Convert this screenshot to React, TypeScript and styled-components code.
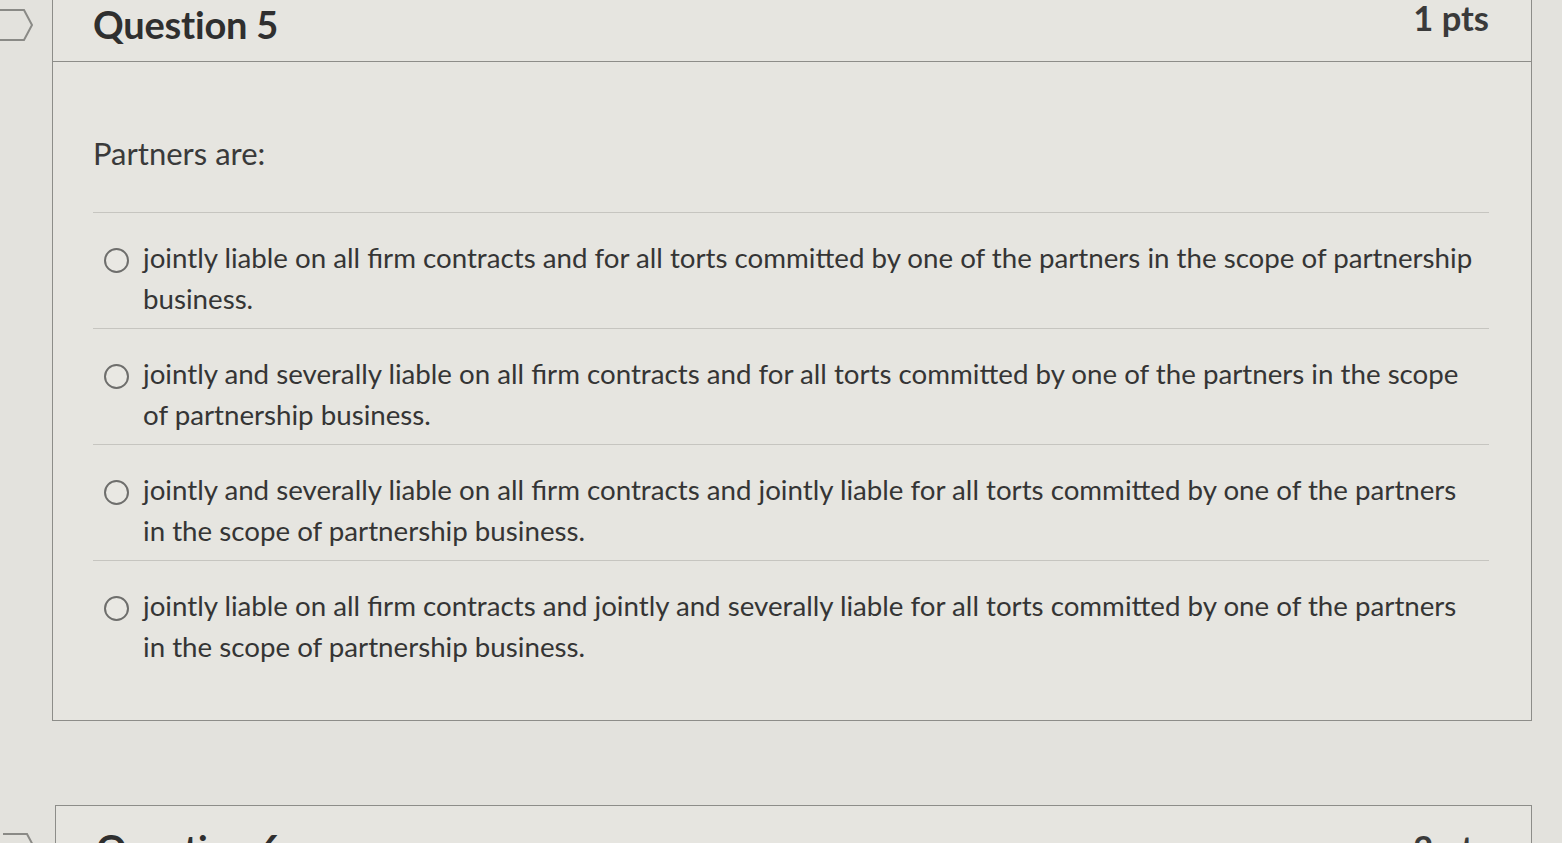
import React from "react";
import styled, { createGlobalStyle } from "styled-components";

const Global = createGlobalStyle`
  html, body { margin: 0; padding: 0; }
  body {
    width: 1562px;
    height: 843px;
    overflow: hidden;
    background: #e3e2dd;
    font-family: Lato, "Noto Sans", "Liberation Sans", sans-serif;
    color: #363636;
  }
`;

const Page = styled.div`
  display: flex;
  flex-direction: column;
  gap: 84px;
  padding-left: 52px;
  width: 1478px;
`;

const Card = styled.section<{ $top?: boolean }>`
  position: relative;
  background: #e6e5e0;
  border: 1px solid #8d8d89;
  border-top: ${(p) => (p.$top ? "none" : "1px solid #8d8d89")};
  margin-left: ${(p) => (p.$top ? "0" : "3px")};
  width: ${(p) => (p.$top ? "1478px" : "1475px")};
`;

const Flag = styled.svg<{ $y: number }>`
  position: absolute;
  left: -53px;
  top: ${(p) => p.$y}px;
  width: 34px;
  height: 34px;
`;

const Header = styled.header`
  display: flex;
  justify-content: space-between;
  align-items: flex-start;
  height: 61px;
  padding: 0 42px 0 40px;
  border-bottom: 1px solid #8d8d89;
`;

const Title = styled.h2<{ $top?: boolean }>`
  margin: ${(p) => (p.$top ? "2px" : "20px")} 0 0;
  font-size: 38px;
  font-weight: 700;
  line-height: 44px;
  color: #2f2f2f;
  letter-spacing: -0.2px;
`;

const Points = styled.div<{ $top?: boolean }>`
  margin-top: ${(p) => (p.$top ? "-4px" : "20px")};
  font-size: 34.5px;
  font-weight: 700;
  line-height: 44px;
  color: #3a3a3a;
`;

const Body = styled.div`
  padding: 72px 42px 0 40px;
`;

const Prompt = styled.p`
  margin: 0 0 40px;
  font-size: 31px;
  line-height: 38px;
  color: #3a3a3a;
`;

const Options = styled.ul`
  list-style: none;
  margin: 0;
  padding: 0;
`;

const Option = styled.li<{ $last?: boolean }>`
  display: flex;
  align-items: flex-start;
  gap: 14px;
  padding: 24px 0 ${(p) => (p.$last ? "53px" : "9px")} 11px;
  border-top: 1px solid #c6c5c0;
`;

const Radio = styled.span`
  flex: none;
  width: 21px;
  height: 21px;
  margin-top: 11px;
  border: 2px solid #6e6e6c;
  border-radius: 50%;
  background: #e9e8e3;
`;

const OptionText = styled.span`
  display: flex;
  flex-direction: column;
  font-size: 27.7px;
  line-height: 41px;
  color: #353535;
`;

const Line = styled.span`
  white-space: nowrap;
`;

const FlagShape = ({ y }: { y: number }) => (
  <Flag $y={y} viewBox="0 0 34 34" fill="none">
    <path d="M-2 2 H24 L32 17 L24 32 H-2" stroke="#8a8a86" strokeWidth="2" />
  </Flag>
);

const options = [
  [
    "jointly liable on all firm contracts and for all torts committed by one of the partners in the scope of partnership",
    "business.",
  ],
  [
    "jointly and severally liable on all firm contracts and for all torts committed by one of the partners in the scope",
    "of partnership business.",
  ],
  [
    "jointly and severally liable on all firm contracts and jointly liable for all torts committed by one of the partners",
    "in the scope of partnership business.",
  ],
  [
    "jointly liable on all firm contracts and jointly and severally liable for all torts committed by one of the partners",
    "in the scope of partnership business.",
  ],
];

export default function App() {
  return (
    <>
      <Global />
      <Page>
        <Card $top>
          <Header>
            <Title $top>Question 5</Title>
            <Points $top>1 pts</Points>
          </Header>
          <FlagShape y={8} />
          <Body>
            <Prompt>Partners are:</Prompt>
            <Options>
              {options.map((lines, i) => (
                <Option key={i} $last={i === options.length - 1}>
                  <Radio />
                  <OptionText>
                    {lines.map((l, j) => (
                      <Line key={j}>{l}</Line>
                    ))}
                  </OptionText>
                </Option>
              ))}
            </Options>
          </Body>
        </Card>
        <Card>
          <Header>
            <Title>Question 6</Title>
            <Points>2 pts</Points>
          </Header>
          <FlagShape y={26} />
        </Card>
      </Page>
    </>
  );
}
